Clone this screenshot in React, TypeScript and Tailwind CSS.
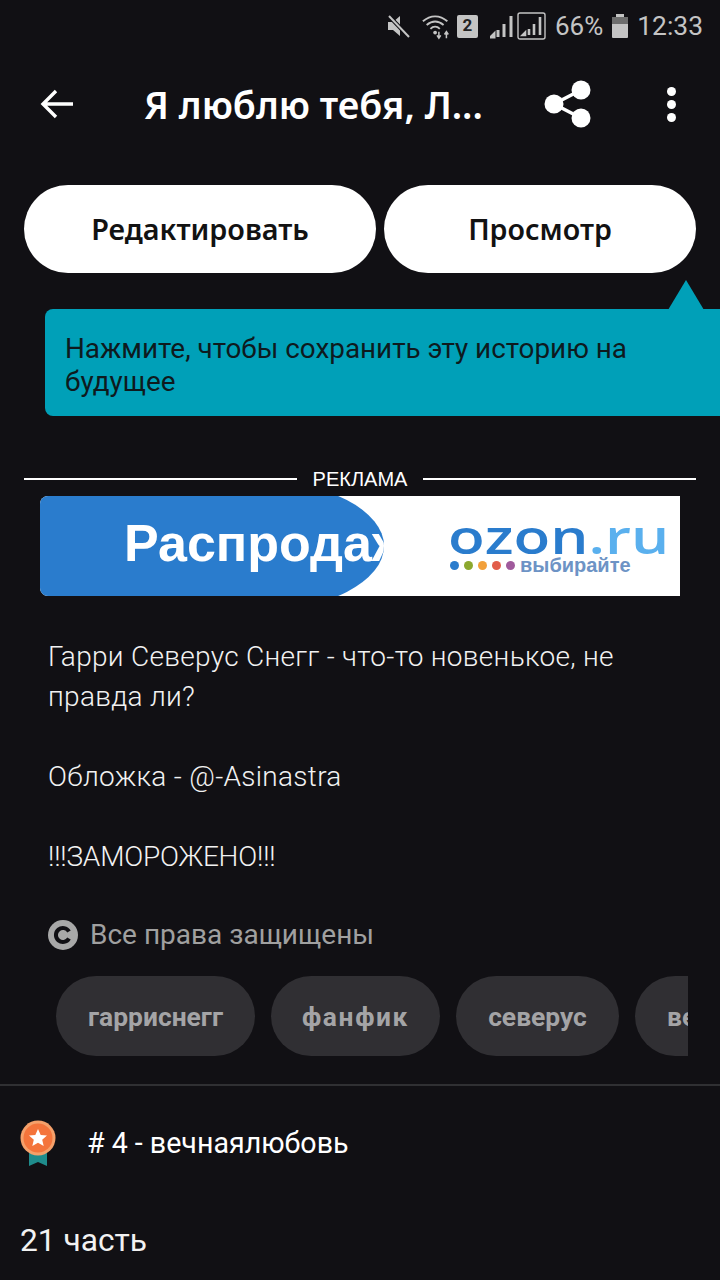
import React from "react";

const tags = [
  { label: "гарриснегг", cls: "w-[199px]" },
  { label: "фанфик", cls: "w-[169px] tracking-[1.6px]" },
  { label: "северус", cls: "w-[163px]" },
  { label: "вечная", cls: "w-[150px] justify-start pl-[32px]" },
];

function StatusBar() {
  return (
    <div className="flex h-[50px] items-center justify-end pt-[2px] pr-[17px] text-[#c4c4c4]">
      {/* muted speaker */}
      <svg width="26" height="26" viewBox="0 0 26 26" className="mr-[9px]">
        <path d="M2 9h5l7-6v20l-7-6H2z" fill="#c4c4c4" />
        <path d="M3 3l20 21" stroke="#111014" strokeWidth="4" />
        <path d="M3 3l20 21" stroke="#c4c4c4" strokeWidth="2" />
      </svg>
      {/* wifi */}
      <svg width="32" height="28" viewBox="0 0 34 28" className="mr-[4px]">
        <g fill="none" stroke="#c4c4c4" strokeWidth="2">
          <path d="M2 9c8-7 18-7 26 0" />
          <path d="M6 13c6-5 12-5 18 0" />
          <path d="M10 17c3-3 7-3 10 0" />
        </g>
        <circle cx="15" cy="21" r="2" fill="#c4c4c4" />
        <path d="M19 20v6M17 24l2 3 2-3M27 27v-7M25 23l2-3 2 3" stroke="#c4c4c4" strokeWidth="1.6" fill="none" />
      </svg>
      <div className="mr-[12px] flex h-[23px] w-[21px] items-center justify-center rounded-[2px] bg-[#c4c4c4] font-['Roboto',sans-serif] text-[17px] font-bold text-[#222]">
        2
      </div>
      {/* signal */}
      <svg width="25" height="26" viewBox="0 0 25 26" className="mr-[2px]">
        <path d="M1 24l3-3v3zM8 24v-7M14 24V11M21 24V3" stroke="#c4c4c4" strokeWidth="3" fill="#c4c4c4" />
      </svg>
      <svg width="30" height="30" viewBox="0 0 30 30" className="mr-[8px]">
        <rect x="1" y="2" width="27" height="26" rx="2" fill="none" stroke="#c4c4c4" strokeWidth="1.4" />
        <path d="M6 24l2-2v2zM12 24v-6M17 24V13M23 24V6" stroke="#c4c4c4" strokeWidth="2.6" fill="#c4c4c4" />
      </svg>
      <span className="mr-[9px] font-['Roboto',sans-serif] text-[26px] leading-none">66%</span>
      <div className="mr-[9px] flex flex-col items-center">
        <div className="h-[3px] w-[8px] bg-[#c4c4c4]" />
        <div className="flex h-[21px] w-[16px] flex-col rounded-[1px] bg-[#c4c4c4]">
          <div className="h-[7px] bg-[#6e6e6e]" />
        </div>
      </div>
      <span className="font-['Roboto',sans-serif] text-[26.400px] leading-none">12:33</span>
    </div>
  );
}

function Header() {
  return (
    <div className="flex h-[110px] items-center pb-[2px]">
      <svg width="36" height="32" viewBox="0 0 36 32" className="ml-[39px]">
        <path d="M34 16H4M17 3L4 16l13 13" fill="none" stroke="#fff" strokeWidth="3.4" />
      </svg>
      <div className="ml-[69px] w-[400px] pt-[2px] font-['Noto_Sans','Open_Sans',sans-serif] text-[37.6px] leading-none font-semibold whitespace-nowrap text-white">
        Я люблю тебя, Л...
      </div>
      <svg width="50" height="48" viewBox="0 0 50 48" className="ml-[-1px]">
        <path d="M38 10L11 24l27 14" fill="none" stroke="#fff" strokeWidth="3.5" />
        <circle cx="38" cy="10" r="9.5" fill="#fff" />
        <circle cx="11" cy="24" r="9.5" fill="#fff" />
        <circle cx="38" cy="38" r="9.5" fill="#fff" />
      </svg>
      <div className="ml-[74px] flex flex-col gap-[4px]">
        <div className="h-[9px] w-[9px] rounded-full bg-white" />
        <div className="h-[9px] w-[9px] rounded-full bg-white" />
        <div className="h-[9px] w-[9px] rounded-full bg-white" />
      </div>
    </div>
  );
}

function AdBanner() {
  return (
    <div className="mx-[40px] flex h-[100px] items-center overflow-hidden rounded-l-[8px] bg-white">
      <div className="flex h-[130px] w-[344px] shrink-0 items-center overflow-hidden rounded-r-[127px_50%] bg-[#2a7ccd] pb-[6px] pl-[84px]">
        <span className="font-['Liberation_Sans',sans-serif] text-[52px] font-bold whitespace-nowrap text-white">
          Распродаж
        </span>
      </div>
      <div className="ml-[64px] flex flex-col">
        <div className="origin-left scale-x-[1.28] font-['Open_Sans',sans-serif] text-[47px] leading-[38px] font-semibold whitespace-nowrap text-[#2a7ccd]">
          ozon<span className="text-[#5ab0ee]">.ru</span>
        </div>
        <div className="flex items-center gap-[5px] pl-[2px]">
          <i className="h-[9px] w-[9px] rounded-full bg-[#2a7ccd]" />
          <i className="h-[9px] w-[9px] rounded-full bg-[#8ca82e]" />
          <i className="h-[9px] w-[9px] rounded-full bg-[#f2a03a]" />
          <i className="h-[9px] w-[9px] rounded-full bg-[#e25d4a]" />
          <i className="h-[9px] w-[9px] rounded-full bg-[#a05a9c]" />
          <span className="font-['Liberation_Sans',sans-serif] text-[20px] leading-[20px] font-bold text-[#6d93c5]">
            выбирайте
          </span>
        </div>
      </div>
    </div>
  );
}

export default function App() {
  return (
    <div className="h-[1280px] w-[720px] overflow-hidden bg-[#111014] font-['Roboto',sans-serif] text-white">
      <StatusBar />
      <Header />
      {/* actions */}
      <div className="mt-[25px] flex gap-[8px] pl-[24px]">
        <div className="flex h-[88px] w-[352px] items-center justify-center rounded-full bg-white font-['Noto_Sans',sans-serif] text-[28.8px] font-semibold text-[#121212]">
          Редактировать
        </div>
        <div className="flex h-[88px] w-[312px] items-center justify-center rounded-full bg-white font-['Noto_Sans',sans-serif] text-[28.6px] font-semibold text-[#121212]">
          Просмотр
        </div>
      </div>
      {/* tooltip */}
      <div className="relative mt-[36px] ml-[45px] h-[107px] rounded-l-[8px] bg-[#00a0b8] pt-[23px] pr-[60px] pl-[20px] text-[27.850px] leading-[33px] text-[#0e1a1e]">
        <svg width="36" height="30" viewBox="0 0 36 30" className="absolute top-[-29px] right-[16px]">
          <path d="M18 0l18 30H0z" fill="#00a0b8" />
        </svg>
        Нажмите, чтобы сохранить эту историю на будущее
      </div>
      {/* ad label */}
      <div className="mt-[50px] flex h-[26px] items-center px-[24px]">
        <div className="h-[2px] flex-1 bg-white" />
        <span className="px-[16px] font-['Liberation_Sans',sans-serif] text-[20px]">РЕКЛАМА</span>
        <div className="h-[2px] flex-1 bg-white" />
      </div>
      <div className="mt-[4px]">
        <AdBanner />
      </div>
      {/* description */}
      <div className="mt-[41px] pr-[60px] pl-[48px] text-[28px] leading-[40px] font-light tracking-[0.3px] text-[#f2f2f2]">
        <p>Гарри Северус Снегг - что-то новенькое, не правда ли?</p>
        <p className="mt-[40px]">Обложка - @-Asinastra</p>
        <p className="mt-[40px] tracking-[-0.2px]">!!!ЗАМОРОЖЕНО!!!</p>
      </div>
      {/* copyright */}
      <div className="mt-[38px] flex items-center pl-[48px]">
        <svg width="30" height="30" viewBox="0 0 30 30" className="mr-[12px]">
          <circle cx="15" cy="15" r="15" fill="#a8a8a8" />
          <path d="M21 11.5a7 7 0 1 0 0 7" fill="none" stroke="#111014" strokeWidth="4" />
        </svg>
        <span className="text-[28px] leading-[40px] text-[#a0a0a0]">Все права защищены</span>
      </div>
      {/* tags */}
      <div className="mt-[21px] ml-[56px] flex w-[632px] gap-[16px] overflow-hidden">
        {tags.map((t) => (
          <div
            key={t.label}
            className={`flex h-[80px] shrink-0 items-center justify-center rounded-full bg-[#302f33] pt-[3px] text-[26.400px] font-bold text-[#a4a4a6] ${t.cls}`}
          >
            {t.label}
          </div>
        ))}
      </div>
      <div className="mt-[28px] h-[2px] bg-[#303033]" />
      {/* rank */}
      <div className="mt-[32px] flex h-[50px] items-center pl-[20px]">
        <svg width="36" height="46" viewBox="0 0 36 46" className="mt-[-1px] mr-[31px]">
          <path d="M9 30v16l9-4 9 4V30z" fill="#1f8c8c" />
          <circle cx="18" cy="18" r="17.5" fill="#f5a06a" />
          <circle cx="18" cy="18" r="14.5" fill="#f4743b" />
          <path d="M18 9l2.7 6 6.3.6-4.8 4.2 1.5 6.2-5.700-3.300-5.700 3.300 1.500-6.200L9 15.600l6.300-.6z" fill="#fff" />
        </svg>
        <span className="text-[28.600px] text-white">
          # 4 - вечнаялюбовь
        </span>
      </div>
      <div className="mt-[53px] pl-[20px] text-[31.700px] leading-[40px] text-[#f2f2f2]">21 часть</div>
    </div>
  );
}
